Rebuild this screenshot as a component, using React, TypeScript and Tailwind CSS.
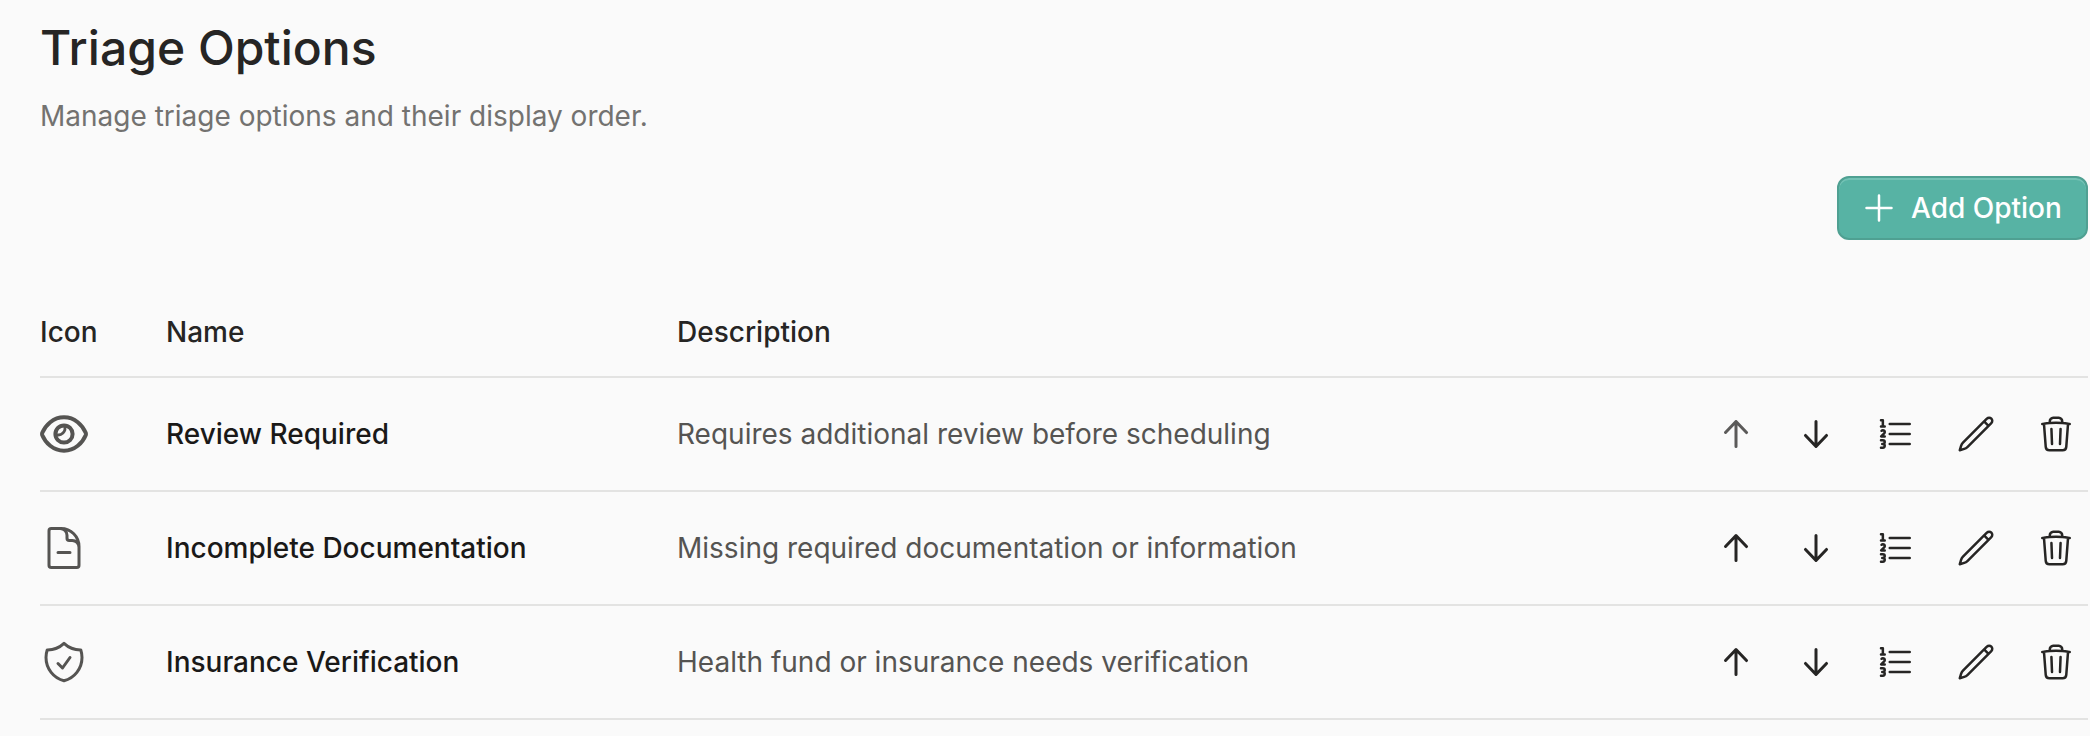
import React from 'react';
import {
  HiMiniArrowDown,
  HiMiniArrowUp,
  HiOutlineDocumentMinus,
  HiOutlineNumberedList,
  HiOutlinePencil,
  HiOutlinePlus,
  HiOutlineShieldCheck,
  HiOutlineTrash,
} from 'react-icons/hi2';

type Icon = React.ComponentType<{ className?: string }>;

interface TriageOption {
  id: string;
  icon: Icon;
  name: string;
  description: string;
}

const EyeIcon: Icon = ({ className }) => (
  <svg xmlns="http://www.w3.org/2000/svg" className={className} fill="none" viewBox="0 0 48 48" stroke="currentColor">
    <path strokeLinejoin="round" strokeWidth={4} d="M2.3 22.8C5.5 15.2 13 7.3 24 7.3s18.5 7.9 21.7 15.5c.3.8.3 1.6 0 2.4C42.5 32.8 35 40.7 24 40.7S5.5 32.8 2.3 25.2c-.3-.8-.3-1.6 0-2.4Z" />
    <circle cx={24} cy={24} r={8.6} strokeWidth={4} />
    <path strokeWidth={2.8} d="M24.4 15.6A6.7 6.7 0 0 1 15.6 24.4" />
  </svg>
);

const options: TriageOption[] = [
  { id: 'review', icon: EyeIcon, name: 'Review Required', description: 'Requires additional review before scheduling' },
  { id: 'incomplete', icon: HiOutlineDocumentMinus, name: 'Incomplete Documentation', description: 'Missing required documentation or information' },
  { id: 'insurance', icon: HiOutlineShieldCheck, name: 'Insurance Verification', description: 'Health fund or insurance needs verification' },
];

interface IconButtonProps {
  icon: Icon;
  label: string;
  disabled?: boolean;
}

const IconButton: React.FC<IconButtonProps> = ({ icon: Icon, label, disabled = false }) => (
  <button aria-label={label} disabled={disabled} className="flex h-16 w-16 items-center justify-center rounded-xl disabled:opacity-75">
    <Icon className="h-10 w-10" />
  </button>
);

const App: React.FC = () => {
  return (
    <div className="h-[736px] w-[2090px] overflow-hidden bg-[#fafafa] pl-10 pr-0.5 font-['Inter',sans-serif] text-[28px] leading-10 text-[#262524]">
      <h1 className="pt-4 text-[48px] font-medium leading-16">Triage Options</h1>
      <p className="mt-4 text-[#737270]">Manage triage options and their display order.</p>

      <div className="mt-10 flex justify-end">
        <button className="flex h-16 w-[251px] items-center gap-3 rounded-xl border-2 border-[#4fa092] bg-[#57b3a4] pl-5 font-medium text-white shadow-[inset_0_2px_0_#73c2b5]">
          <HiOutlinePlus className="h-10 w-10" />
          Add Option
        </button>
      </div>

      <table className="mt-[46px] w-full table-fixed text-left">
        <thead>
          <tr className="h-[91px] border-b-2 border-[#e3e3e2]">
            <th className="w-[126px] pt-0.5 font-medium">Icon</th>
            <th className="w-[511px] pt-0.5 font-medium">Name</th>
            <th className="pt-0.5 font-medium">Description</th>
            <th className="w-[384px]" />
          </tr>
        </thead>
        <tbody>
          {options.map(({ id, icon: Icon, name, description }, index) => (
            <tr key={id} className="h-[114px] border-b-2 border-[#e3e3e2]">
              <td>
                <Icon className="h-12 w-12 text-[#555452]" />
              </td>
              <td className="font-medium text-[#1a1918]">{name}</td>
              <td className="text-[#555452]">{description}</td>
              <td>
                <div className="flex gap-4">
                  <IconButton icon={HiMiniArrowUp} label="Move up" disabled={index === 0} />
                  <IconButton icon={HiMiniArrowDown} label="Move down" />
                  <IconButton icon={HiOutlineNumberedList} label="Set order" />
                  <IconButton icon={HiOutlinePencil} label="Edit" />
                  <IconButton icon={HiOutlineTrash} label="Delete" />
                </div>
              </td>
            </tr>
          ))}
        </tbody>
      </table>
    </div>
  );
};

export default App;
